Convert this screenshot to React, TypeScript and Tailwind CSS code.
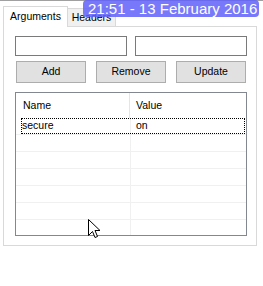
import React from "react";

const rows = [
  { name: "secure", value: "on" },
  { name: "", value: "" },
  { name: "", value: "" },
  { name: "", value: "" },
  { name: "", value: "" },
  { name: "", value: "" },
  { name: "", value: "" },
];

export default function App() {
  return (
    <div
      className="relative w-[263px] h-[286px] bg-white overflow-hidden text-black text-[10.5px]"
      style={{ fontFamily: '"Liberation Sans", Arial, sans-serif' }}
    >
      <div className="h-px bg-[#a0a0a0]" />
      <div className="pl-[3px]">
        {/* tab strip */}
        <div className="flex items-end h-[25px]">
          <div className="relative z-10 w-[65px] h-[21px] -mb-px bg-white border border-b-0 border-[#d9d9d9] flex items-center justify-center">
            Arguments
          </div>
          <div className="w-[48px] h-[18px] bg-[#f0f0f0] border border-l-0 border-b-0 border-[#d9d9d9] flex items-center justify-center">
            Headers
          </div>
        </div>
        {/* panel */}
        <div className="w-[254px] h-[220px] border border-[#d9d9d9] bg-white pt-[9px] pl-[11px]">
          <div className="flex gap-[8px]">
            <div className="w-[112px] h-[20px] border border-[#7a7a7a] bg-white" />
            <div className="w-[112px] h-[20px] border border-[#7a7a7a] bg-white" />
          </div>
          <div className="flex gap-[10px] mt-[5px] ml-[1px]">
            {["Add", "Remove", "Update"].map((b) => (
              <div
                key={b}
                className="w-[70px] h-[22px] bg-[#e1e1e1] border border-[#adadad] flex items-center justify-center"
              >
                {b}
              </div>
            ))}
          </div>
          <div className="mt-[9px] w-[232px] h-[144px] border border-[#828790] bg-white overflow-hidden">
            <div className="flex h-[25px] items-center">
              <div className="w-[114px] h-full pl-[7px] flex items-center border-r border-[#e5e5e5]">
                Name
              </div>
              <div className="pl-[6px]">Value</div>
            </div>
            {rows.map((r, i) => (
              <div key={i} className="relative flex h-[17px] border-b border-[#f0f0f0]">
                <div className="w-[115px] h-full pl-[6px] flex items-center border-r border-[#f0f0f0]">
                  {r.name}
                </div>
                <div className="pl-[5px] flex items-center">{r.value}</div>
                {i === 0 && (
                  <div className="absolute left-[5px] right-[1px] top-0 bottom-0 border border-dotted border-black" />
                )}
              </div>
            ))}
          </div>
        </div>
      </div>

      {/* date overlay */}
      <div className="absolute left-[83px] top-0 w-[176px] h-[17px] rounded-[4px] bg-[rgba(96,96,250,0.85)] text-white text-[15px] leading-[17px] pl-[5px] whitespace-nowrap">
        21:51 - 13 February 2016
      </div>

      {/* mouse cursor */}
      <svg
        className="absolute left-[88px] top-[219px]"
        width="13"
        height="20"
        viewBox="0 0 13 20"
      >
        <path
          d="M0.5 0.5 L0.5 16.5 L4.5 12.5 L7 18.5 L9.5 17.5 L7 11.5 L12 11.5 Z"
          fill="white"
          stroke="black"
          strokeWidth="1"
          strokeLinejoin="miter"
        />
      </svg>
    </div>
  );
}
